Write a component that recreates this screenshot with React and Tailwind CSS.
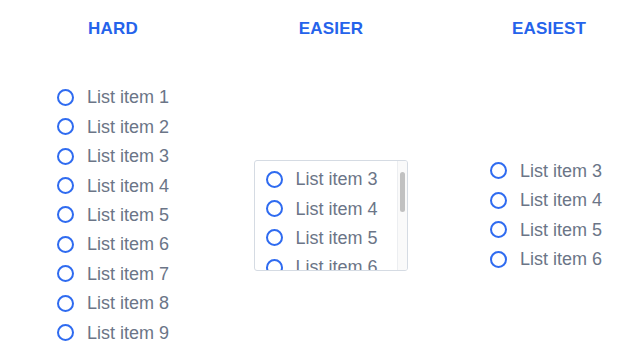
const blue = '#2563eb'

function Item({ n }) {
  return (
    <li className="flex items-center h-[29.4px]">
      <span className="w-[17px] h-[17px] rounded-full border-2 border-[#2f6bf0] shrink-0" />
      <span className="ml-[13px] text-[18px] text-[#6b7587] leading-none whitespace-nowrap">List item {n}</span>
    </li>
  )
}

function Column({ title, children }) {
  return (
    <div className="flex flex-col">
      <div className="h-[58px] flex items-center justify-center">
        <h2 className="text-[17px] font-bold text-[#2563eb] tracking-[0.2px]">{title}</h2>
      </div>
      <div className="h-[295px] pt-[19px] flex items-center justify-center">{children}</div>
    </div>
  )
}

export default function App() {
  return (
    <div
      className="w-[642px] h-[353px] bg-white overflow-hidden grid grid-cols-[218px_218px_218px] pl-[4px]"
      style={{ fontFamily: '"Liberation Sans", Arial, sans-serif' }}
    >
      <Column title="HARD">
        <ul>
          {[1, 2, 3, 4, 5, 6, 7, 8, 9].map(n => <Item key={n} n={n} />)}
        </ul>
      </Column>

      <Column title="EASIER">
        <div className="relative -ml-[1px] w-[154px] h-[111px] border border-[#d5dbe3] rounded-[3px] overflow-hidden flex">
          <ul className="flex-1 pt-[4px] pl-[11px]">
            {[3, 4, 5, 6].map(n => <Item key={n} n={n} />)}
          </ul>
          {/* fake scrollbar */}
          <div className="w-[10px] h-full border-l border-[#eceef1] bg-[#fafafa] flex justify-center pt-[11px]">
            <div className="w-[5px] h-[40px] rounded-full bg-[#c1c1c1]" />
          </div>
        </div>
      </Column>

      <Column title="EASIEST">
        <ul className="-ml-[6px]">
          {[3, 4, 5, 6].map(n => <Item key={n} n={n} />)}
        </ul>
      </Column>
    </div>
  )
}
